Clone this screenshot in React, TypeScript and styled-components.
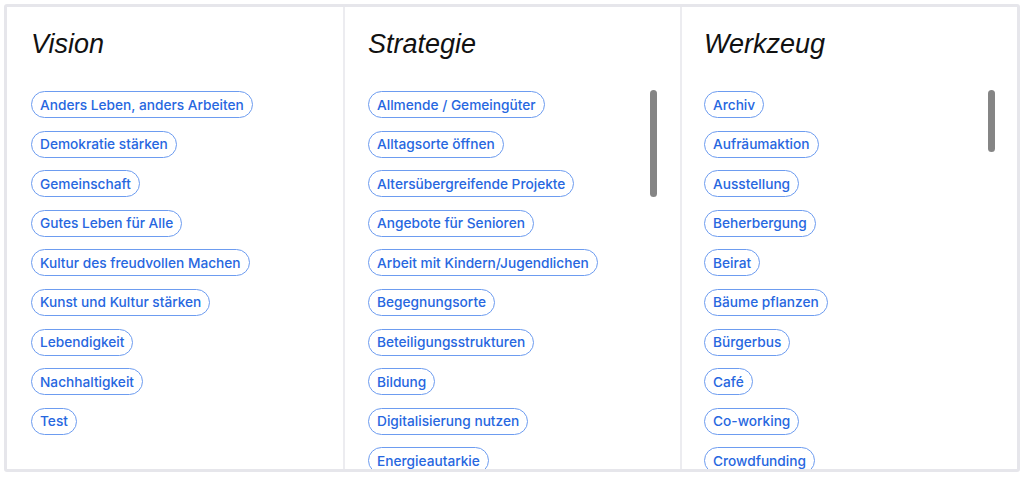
import React from "react";
import styled, { createGlobalStyle } from "styled-components";

const Global = createGlobalStyle`
  html, body { margin: 0; padding: 0; background: #ffffff; }
  body { font-family: Inter, "Noto Sans", sans-serif; }
  * { box-sizing: border-box; }
`;

const Frame = styled.div`
  margin: 4px 4px 0 4px;
  width: 1016px;
  height: 468px;
  border: 3px solid #e6e6eb;
  border-radius: 3px;
  display: grid;
  grid-template-columns: 338px 337px 1fr;
  overflow: hidden;
  background: #fff;
`;

const Column = styled.section<{ $pad: number; $last?: boolean }>`
  position: relative;
  display: flex;
  flex-direction: column;
  padding-left: ${(p) => p.$pad}px;
  border-right: ${(p) => (p.$last ? "none" : "2px solid #ececf0")};
  overflow: hidden;
  min-height: 0;
`;

const Heading = styled.h2`
  margin: 22px 0 0 0;
  font-family: "Liberation Sans", Arial, sans-serif;
  font-style: italic;
  font-weight: 400;
  font-size: 27px;
  line-height: 31px;
  color: #111;
`;

const TagList = styled.ul`
  list-style: none;
  margin: 31px 0 0 0;
  padding: 0;
  display: flex;
  flex-direction: column;
  align-items: flex-start;
  gap: 12.6px;
`;

const Tag = styled.li`
  height: 27px;
  display: inline-flex;
  align-items: center;
  padding: 0 8px;
  border: 1px solid #6d9cf0;
  border-radius: 14px;
  font-family: Inter, "Noto Sans", sans-serif;
  font-size: 13.7px;
  font-weight: 500;
  color: #2767df;
  white-space: nowrap;
`;

const Thumb = styled.div<{ $right: number; $height: number }>`
  position: absolute;
  top: 83px;
  right: ${(p) => p.$right}px;
  width: 7px;
  height: ${(p) => p.$height}px;
  border-radius: 4px;
  background: #858585;
`;

const columns = [
  {
    title: "Vision",
    pad: 24,
    tags: [
      "Anders Leben, anders Arbeiten",
      "Demokratie stärken",
      "Gemeinschaft",
      "Gutes Leben für Alle",
      "Kultur des freudvollen Machen",
      "Kunst und Kultur stärken",
      "Lebendigkeit",
      "Nachhaltigkeit",
      "Test",
    ],
  },
  {
    title: "Strategie",
    pad: 23,
    thumb: { right: 23, height: 107 },
    tags: [
      "Allmende / Gemeingüter",
      "Alltagsorte öffnen",
      "Altersübergreifende Projekte",
      "Angebote für Senioren",
      "Arbeit mit Kindern/Jugendlichen",
      "Begegnungsorte",
      "Beteiligungsstrukturen",
      "Bildung",
      "Digitalisierung nutzen",
      "Energieautarkie",
      "Gemeinwohl",
    ],
  },
  {
    title: "Werkzeug",
    pad: 22,
    thumb: { right: 22, height: 62 },
    tags: [
      "Archiv",
      "Aufräumaktion",
      "Ausstellung",
      "Beherbergung",
      "Beirat",
      "Bäume pflanzen",
      "Bürgerbus",
      "Café",
      "Co-working",
      "Crowdfunding",
      "Dorfladen",
    ],
  },
];

export default function App() {
  return (
    <>
      <Global />
      <Frame>
        {columns.map((c, i) => (
          <Column key={c.title} $pad={c.pad} $last={i === columns.length - 1}>
            <Heading>{c.title}</Heading>
            <TagList>
              {c.tags.map((t) => (
                <Tag key={t}>{t}</Tag>
              ))}
            </TagList>
            {c.thumb && <Thumb $right={c.thumb.right} $height={c.thumb.height} />}
          </Column>
        ))}
      </Frame>
    </>
  );
}
